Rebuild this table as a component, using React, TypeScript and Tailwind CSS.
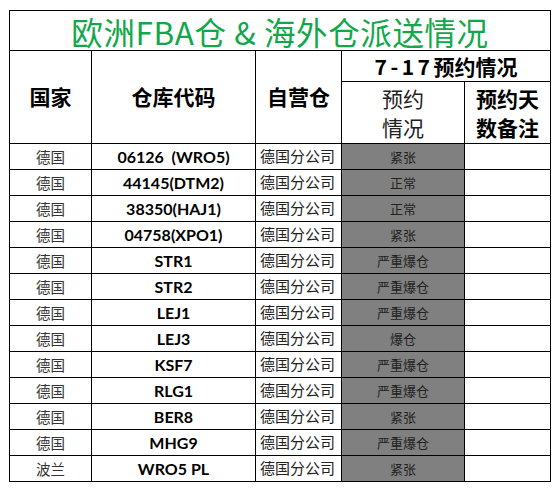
import React from "react";

const rows: [string, string, string][] = [
  ["德国", "06126\u00a0\u00a0(WRO5)", "紧张"],
  ["德国", "44145(DTM2)", "正常"],
  ["德国", "38350(HAJ1)", "正常"],
  ["德国", "04758(XPO1)", "紧张"],
  ["德国", "STR1", "严重爆仓"],
  ["德国", "STR2", "严重爆仓"],
  ["德国", "LEJ1", "严重爆仓"],
  ["德国", "LEJ3", "爆仓"],
  ["德国", "KSF7", "严重爆仓"],
  ["德国", "RLG1", "严重爆仓"],
  ["德国", "BER8", "紧张"],
  ["德国", "MHG9", "严重爆仓"],
  ["波兰", "WRO5 PL", "紧张"],
];

const font = { fontFamily: '"Noto Sans CJK SC", sans-serif' };

export default function App() {
  return (
    <div className="w-[560px] h-[492px] bg-white" style={font}>
      <div className="pt-[10px] pl-[9px]">
        <div className="grid w-[542px] bg-black p-px gap-px grid-cols-[81px_163px_85px_122px_85px] grid-rows-[39px_30px_61px_repeat(13,25px)]">
          <div className="col-span-5 bg-white flex items-center justify-center pt-[2px] text-[31.5px] tracking-[0.6px] leading-none text-[#12a84a]">
            欧洲FBA仓 &amp; 海外仓派送情况
          </div>
          <div className="row-span-2 bg-white flex items-center justify-center text-[21px] font-semibold text-black">
            国家
          </div>
          <div className="row-span-2 bg-white flex items-center justify-center text-[21px] font-semibold text-black">
            仓库代码
          </div>
          <div className="row-span-2 bg-white flex items-center justify-center text-[21px] font-semibold text-black">
            自营仓
          </div>
          <div className="col-span-2 bg-white flex items-center justify-center text-[21px] leading-none font-semibold text-black">
            <span className="tracking-[3.5px]">7-17</span>
            <span>预约情况</span>
          </div>
          <div className="bg-white flex flex-col items-center justify-center text-[21px] leading-[29px] text-[#222]">
            <span>预约</span>
            <span>情况</span>
          </div>
          <div className="bg-white flex flex-col items-center justify-center text-[21px] leading-[29px] font-semibold text-black">
            <span>预约天</span>
            <span>数备注</span>
          </div>
          {rows.map(([country, code, status], i) => (
            <React.Fragment key={i}>
              <div className="bg-white flex items-center justify-center text-[14.5px] text-[#333]">
                {country}
              </div>
              <div
                className="bg-white flex items-center justify-center text-[16px] font-bold text-black"
                style={{ fontFamily: 'Lato, "Noto Sans CJK SC", sans-serif' }}
              >
                {code}
              </div>
              <div className="bg-white flex items-center pl-[4px] text-[15px] text-[#222]">
                德国分公司
              </div>
              <div className="bg-[#808080] flex items-center justify-center text-[13px] text-[#222]">
                {status}
              </div>
              <div className="bg-white" />
            </React.Fragment>
          ))}
        </div>
      </div>
    </div>
  );
}
